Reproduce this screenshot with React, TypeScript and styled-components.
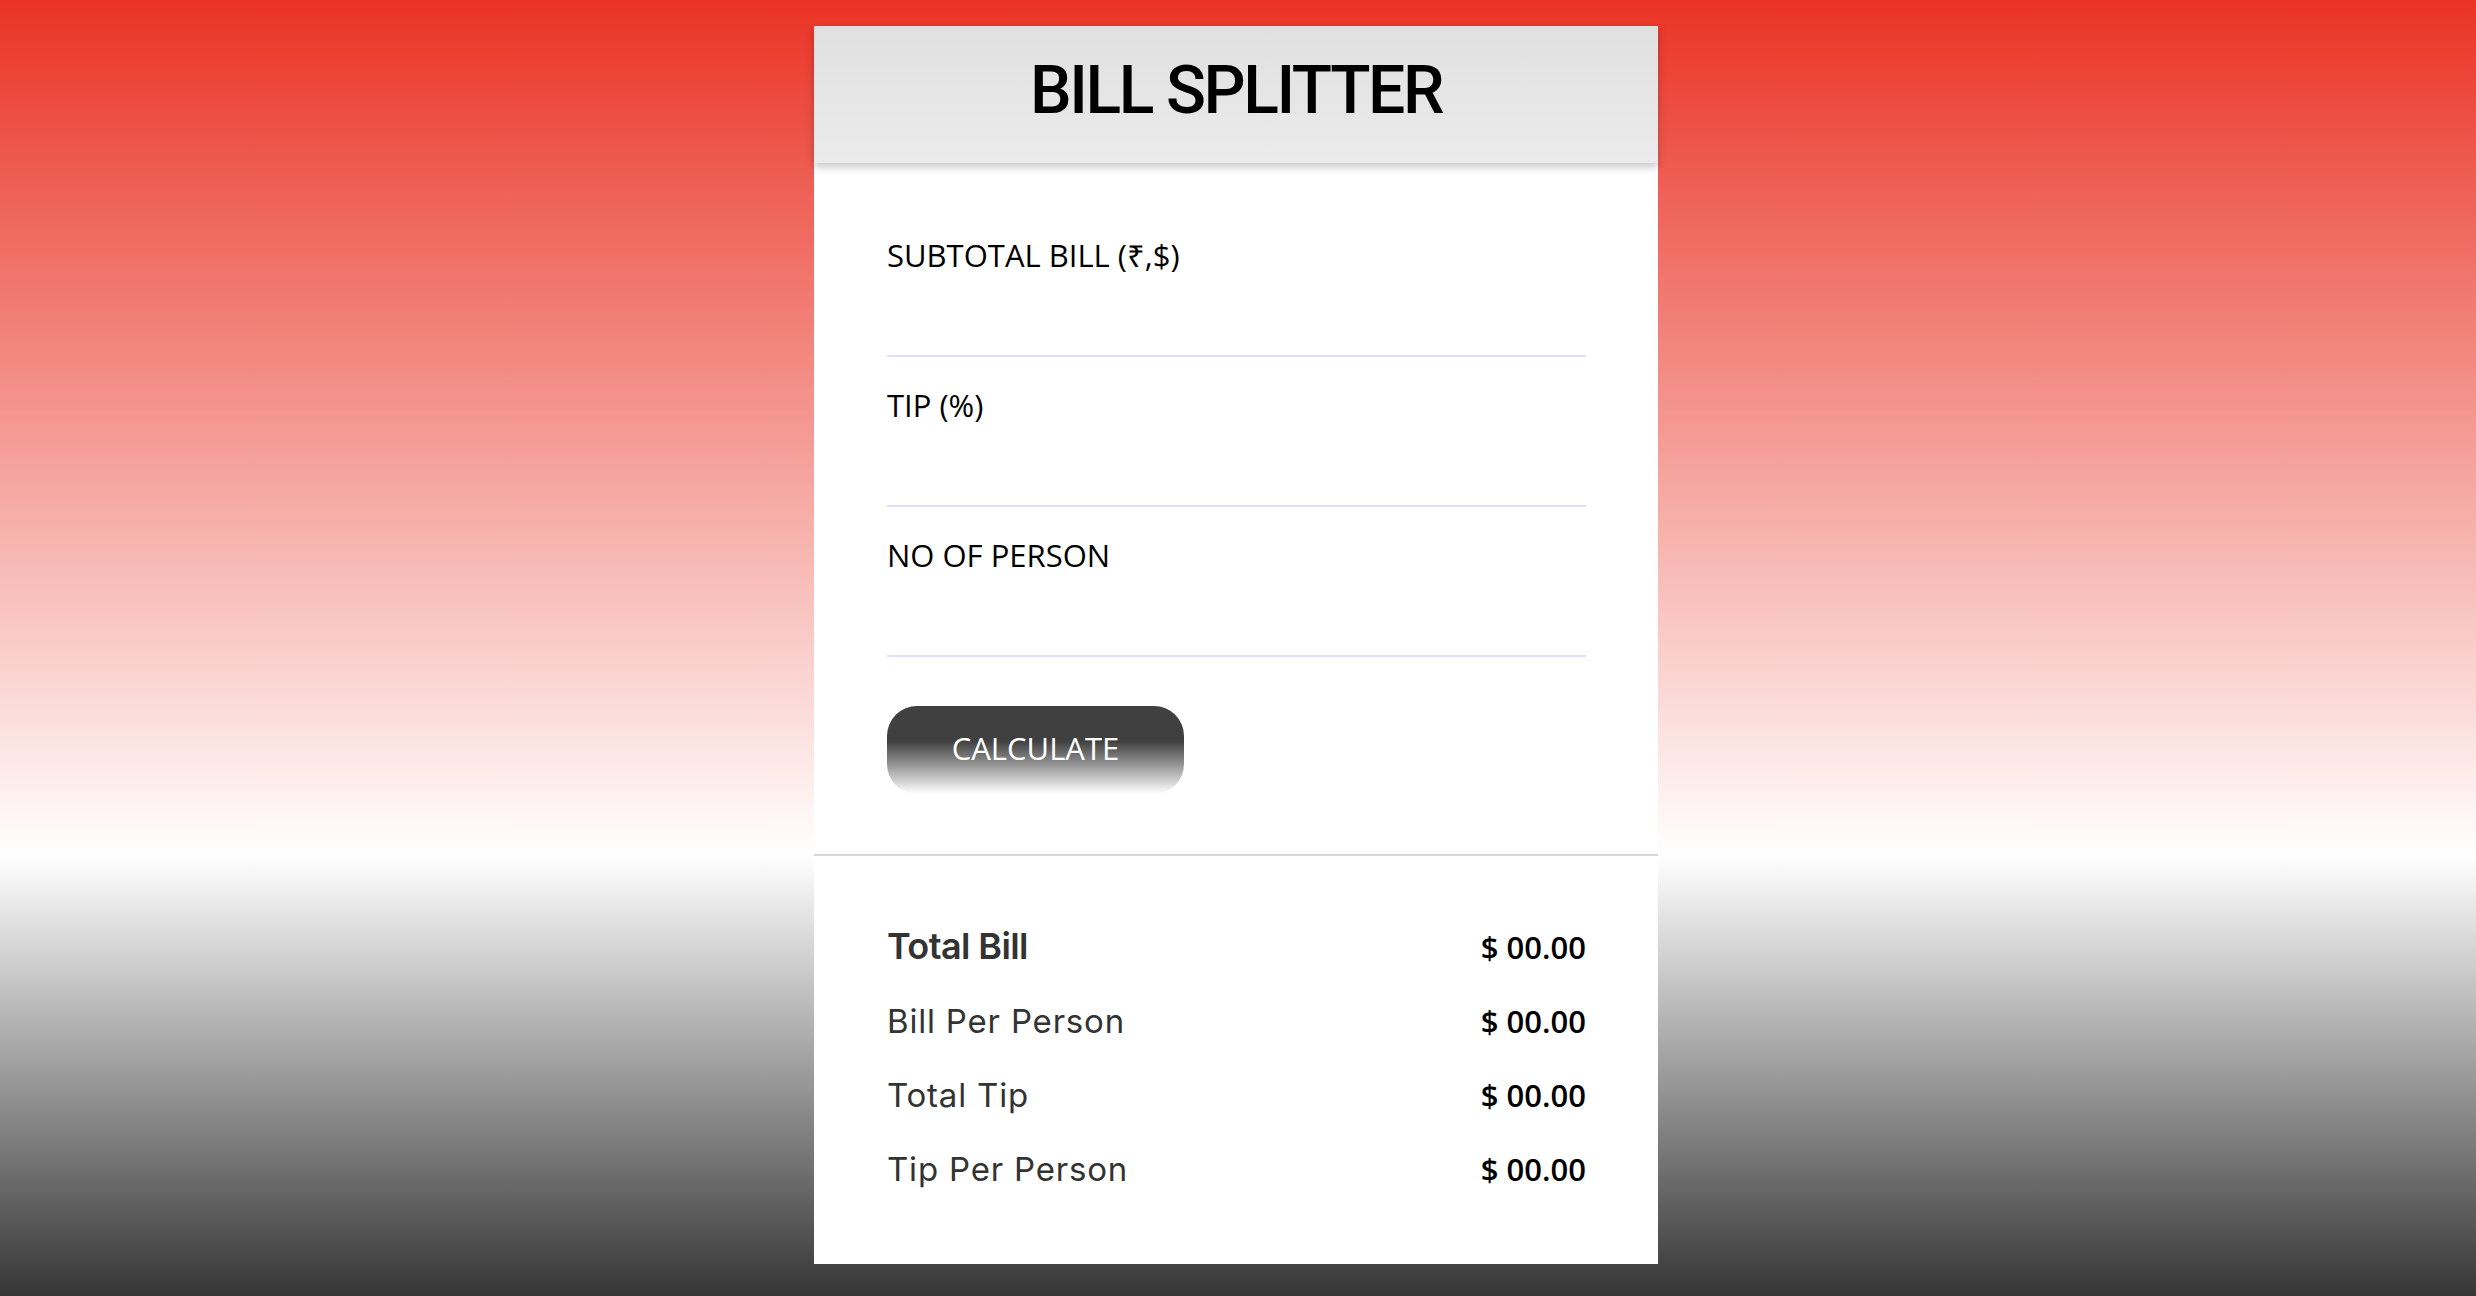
import React from "react";
import styled, { createGlobalStyle } from "styled-components";

const GlobalStyle = createGlobalStyle`
  * { box-sizing: border-box; }
  html, body { margin: 0; padding: 0; }
  body {
    min-height: 100vh;
    font-family: "Open Sans", "Noto Sans", sans-serif;
    background: linear-gradient(to bottom, #ea3325 0%, #ffffff 66%, #363636 100%);
    background-attachment: fixed;
  }
`;

const Page = styled.main`
  min-height: 100vh;
  display: flex;
  justify-content: center;
  align-items: flex-start;
  padding: 26px 4px 0 0;
`;

const Card = styled.section`
  width: 844px;
  background: #ffffff;
  display: flex;
  flex-direction: column;
`;

const Header = styled.header`
  height: 137px;
  display: flex;
  align-items: center;
  justify-content: center;
  padding-bottom: 8px;
  background: linear-gradient(to bottom, #e0e0e0, #ebebeb);
  box-shadow: 0 4px 8px rgba(0, 0, 0, 0.22);
  position: relative;
  z-index: 1;
`;

const Title = styled.h1`
  margin: 0;
  font-family: Roboto, "Noto Sans", sans-serif;
  font-weight: 500;
  font-size: 66px;
  letter-spacing: -2.4px;
  line-height: 1;
  color: #000;
`;

const Form = styled.form`
  display: flex;
  flex-direction: column;
  padding: 71px 72px 60px 73px;
  border-bottom: 2px solid #d6d6d6;
`;

const Field = styled.div`
  display: flex;
  flex-direction: column;
  margin-bottom: 27px;
`;

const Label = styled.label`
  font-size: 31px;
  line-height: 42px;
  color: #000;
  font-weight: 400;
`;

const Input = styled.input`
  height: 81px;
  border: none;
  border-bottom: 2px solid #e2ddf9;
  background: transparent;
  outline: none;
  font-family: inherit;
  font-size: 30px;
  padding: 0;
`;

const Button = styled.button`
  align-self: flex-start;
  margin-top: 22px;
  width: 297px;
  height: 88px;
  border: none;
  border-radius: 30px;
  background: linear-gradient(to bottom, #404040 40%, #ffffff 100%);
  color: #ffffff;
  font-family: "Open Sans", "Noto Sans", sans-serif;
  font-size: 31px;
  cursor: pointer;
  padding: 0 0 4px;
`;

const Results = styled.div`
  display: flex;
  flex-direction: column;
  gap: 30px;
  padding: 68px 72px 73px 73px;
`;

const Row = styled.div`
  display: flex;
  justify-content: space-between;
  align-items: baseline;
  line-height: 44px;
`;

const RowLabel = styled.span<{ $strong?: boolean }>`
  font-family: Inter, "Noto Sans", sans-serif;
  font-size: ${(p) => (p.$strong ? "36px" : "33px")};
  font-weight: ${(p) => (p.$strong ? 600 : 400)};
  color: #333333;
  letter-spacing: ${(p) => (p.$strong ? "-0.6px" : "0.8px")};
`;

const Value = styled.span`
  font-family: "Open Sans", "Noto Sans", sans-serif;
  font-size: 31px;
  font-weight: 600;
  color: #000;
`;

const rows = [
  { label: "Total Bill", strong: true },
  { label: "Bill Per Person" },
  { label: "Total Tip" },
  { label: "Tip Per Person" },
];

export default function App() {
  return (
    <>
      <GlobalStyle />
      <Page>
        <Card>
          <Header>
            <Title>BILL SPLITTER</Title>
          </Header>
          <Form onSubmit={(e) => e.preventDefault()}>
            <Field>
              <Label>SUBTOTAL BILL (₹,$)</Label>
              <Input type="text" />
            </Field>
            <Field>
              <Label>TIP (%)</Label>
              <Input type="text" />
            </Field>
            <Field>
              <Label>NO OF PERSON</Label>
              <Input type="text" />
            </Field>
            <Button type="submit">CALCULATE</Button>
          </Form>
          <Results>
            {rows.map((r) => (
              <Row key={r.label}>
                <RowLabel $strong={r.strong}>{r.label}</RowLabel>
                <Value>$ 00.00</Value>
              </Row>
            ))}
          </Results>
        </Card>
      </Page>
    </>
  );
}
